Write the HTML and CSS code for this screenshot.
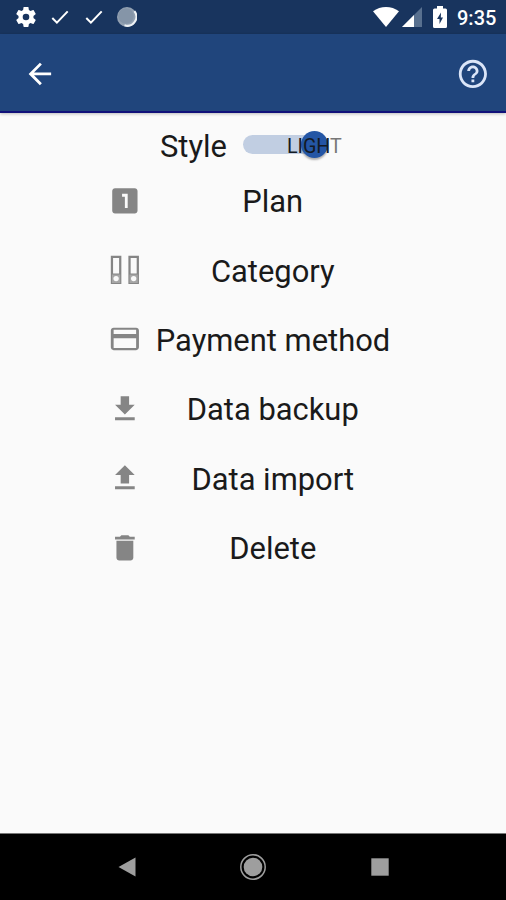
FILE: index.html
```html
<!DOCTYPE html>
<html lang="en">
<head>
<meta charset="utf-8">
<title>Settings</title>
<link rel="stylesheet" href="styles.css">
</head>
<body>
<div class="screen">
  <header class="status">
    <svg class="gear" viewBox="0 0 24 24"><path d="M19.43 12.98c.04-.32.07-.64.07-.98s-.03-.66-.07-.98l2.11-1.65c.19-.15.24-.42.12-.64l-2-3.46c-.12-.22-.39-.3-.61-.22l-2.49 1c-.52-.4-1.08-.73-1.69-.98l-.38-2.65C14.46 2.18 14.25 2 14 2h-4c-.25 0-.46.18-.49.42l-.38 2.65c-.61.25-1.17.59-1.69.98l-2.49-1c-.23-.09-.49 0-.61.22l-2 3.46c-.13.22-.07.49.12.64l2.11 1.65c-.04.32-.07.65-.07.98s.03.66.07.98l-2.11 1.65c-.19.15-.24.42-.12.64l2 3.46c.12.22.39.3.61.22l2.49-1c.52.4 1.08.73 1.69.98l.38 2.65c.03.24.24.42.49.42h4c.25 0 .46-.18.49-.42l.38-2.65c.61-.25 1.17-.59 1.69-.98l2.49 1c.23.09.49 0 .61-.22l2-3.46c.12-.22.07-.49-.12-.64zM12 15.3a3.3 3.3 0 1 1 0-6.600 3.300 3.300 0 0 1 0 6.600z"/></svg>
    <svg class="check" viewBox="0 0 18 14"><path d="M1.300 8l4.600 4.600L16.700 1.400"/></svg>
    <svg class="check" viewBox="0 0 18 14"><path d="M1.300 8l4.600 4.600L16.700 1.400"/></svg>
    <svg class="sync" viewBox="0 0 20 20"><circle cx="10" cy="10" r="10" fill="#93a1b2"/><path d="M17.400 4.200A9 9 0 0 1 7.500 18.300" fill="none" stroke="#eef2f5" stroke-width="2"/><circle cx="9" cy="9" r="7.800" fill="#8595a8"/></svg>
    <span class="spacer"></span>
    <svg class="wifi" viewBox="0 0 26 20"><path d="M0 4.300C7.500-1.400 18.500-1.400 26 4.300L13 20z"/></svg>
    <svg class="signal" viewBox="0 0 20 20"><path d="M20 0v20H0z" fill="#58708f"/><path d="M12 8v12H0z"/></svg>
    <svg class="battery" viewBox="0 0 14 22"><path d="M4 0h6v2.500h2.500A1.500 1.500 0 0 1 14 4v16.500a1.500 1.500 0 0 1-1.500 1.500h-11A1.500 1.500 0 0 1 0 20.500V4a1.500 1.500 0 0 1 1.500-1.500H4z"/><path d="M8 6.500L4 13h2.500v5L10 11.500H7.800z" fill="#18345e"/></svg>
    <span class="clock">9:35</span>
  </header>
  <nav class="appbar">
    <svg class="icon" viewBox="0 0 24 24"><path d="M20 11H7.830l5.590-5.590L12 4l-8 8 8 8 1.410-1.410L7.830 13H20z"/></svg>
    <svg class="icon help" viewBox="0 0 24 24"><path d="M11 18h2v-2h-2v2zm1-16C6.480 2 2 6.480 2 12s4.480 10 10 10 10-4.480 10-10S17.520 2 12 2zm0 18c-4.410 0-8-3.590-8-8s3.590-8 8-8 8 3.590 8 8-3.590 8-8 8zm0-14c-2.210 0-4 1.790-4 4h2c0-1.100.9-2 2-2s2 .9 2 2c0 2-3 1.750-3 5h2c0-2.250 3-2.500 3-5 0-2.210-1.790-4-4-4z"/></svg>
  </nav>
  <main class="content">
    <div class="style-row">
      <span class="label">Style</span>
      <div class="switch"><span class="thumb"></span><span class="mode">LIGH<span class="off">T</span></span></div>
    </div>
    <div class="row"><svg class="icon" viewBox="0 0 24 24"><path d="M19 3H5c-1.100 0-2 .9-2 2v14c0 1.100.9 2 2 2h14c1.100 0 2-.9 2-2V5c0-1.100-.9-2-2-2zm-5 14h-2V9h-2V7h4v10z"/></svg><span class="label">Plan</span></div>
    <div class="row"><svg class="icon binder" viewBox="0 0 24 24"><path d="M2.800 2.700h5.900v18.600H2.800zM15.300 2.700h5.900v18.600h-5.900zM2.800 15.300h5.900M15.300 15.300h5.900"/><path class="shade" d="M2.800 15.300h5.900v6H2.800zM15.300 15.300h5.900v6h-5.900z"/><circle class="hole" cx="5.750" cy="18.200" r="1.900"/><circle class="hole" cx="18.250" cy="18.200" r="1.900"/></svg><span class="label">Category</span></div>
    <div class="row"><svg class="icon" viewBox="0 0 24 24"><path d="M20 4H4c-1.110 0-1.990.89-1.990 2L2 18c0 1.110.89 2 2 2h16c1.110 0 2-.89 2-2V6c0-1.110-.89-2-2-2zm0 14.500H4V11.500h16zm0-10H4V5.500h16z"/></svg><span class="label">Payment method</span></div>
    <div class="row"><svg class="icon" viewBox="0 0 24 24"><path d="M19 9h-4V3H9v6H5l7 7zM5 18v2h14v-2z"/></svg><span class="label">Data backup</span></div>
    <div class="row"><svg class="icon" viewBox="0 0 24 24"><path d="M9 16h6v-6h4l-7-7-7 7h4zM5 18v2h14v-2z"/></svg><span class="label">Data import</span></div>
    <div class="row"><svg class="icon" viewBox="0 0 24 24"><path d="M6 19c0 1.100.9 2 2 2h8c1.100 0 2-.9 2-2V7H6zM19 4h-3.500l-1-1h-5l-1 1H5v2h14z"/></svg><span class="label">Delete</span></div>
  </main>
  <footer class="navbar">
    <svg viewBox="0 0 28 28"><path d="M5.500 14L22.500 4.500v19z"/></svg>
    <svg viewBox="0 0 28 28"><circle cx="14" cy="14" r="9.300"/><circle cx="14" cy="14" r="12.200" fill="none" stroke="#9e9e9e" stroke-width="1.500"/></svg>
    <svg viewBox="0 0 28 28"><path d="M5.300 5.300h17.400v17.400H5.300z"/></svg>
  </footer>
</div>
</body>
</html>
```
FILE: styles.css
```css
* { box-sizing: border-box; }
body { margin: 0; font-family: Roboto, sans-serif; }
svg { display: block; flex: none; }
.screen { width: 506px; height: 900px; display: flex; flex-direction: column; background: #fafafa; overflow: hidden; }
.status { height: 34px; flex: none; display: flex; align-items: center; padding: 0 10px 0 14px; background: #18345e; fill: #fff; }
.gear { width: 24px; height: 24px; }
.check { width: 18px; height: 14px; margin-left: 13px; fill: none; stroke: #fff; stroke-width: 2; }
.check + .check { margin-left: 16px; }
.sync { width: 20px; height: 20px; margin-left: 14px; }
.spacer { flex: 1; }
.wifi { width: 26px; height: 20px; }
.signal { width: 20px; height: 20px; margin-left: 3px; }
.battery { width: 14px; height: 22px; margin: 0 10px 0 11px; }
.clock { font-size: 20px; line-height: 34px; font-weight: 500; color: #fff; width: 39px; white-space: nowrap; padding-top: 2px; }
.appbar { height: 79px; flex: none; display: flex; align-items: center; justify-content: space-between; padding: 2px 16px 0 23px; background: #20457c; border-bottom: 2px solid #11117a; box-shadow: 0 1px 3px rgba(0, 0, 0, .25); }
.icon { width: 33.75px; height: 33.75px; fill: #858585; }
.appbar .icon { fill: #fff; }
.appbar .help { fill: #dbe5f8; }
.content { flex: 1; min-height: 0; }
.style-row { height: 53px; display: flex; align-items: center; padding: 12px 0 0 160px; }
.label { font-size: 30.9px; line-height: 36px; color: #1a1a1a; white-space: nowrap; padding-top: 3px; }
.style-row .label { padding-top: 2px; }
.switch { position: relative; width: 85px; height: 19px; margin: -3px 0 0 16px; border-radius: 10px; background: #c1cee2; }
.thumb { position: absolute; left: 58px; top: -4px; width: 27px; height: 27px; border-radius: 50%; background: #2456a5; box-shadow: 0 2px 2px rgba(0, 0, 0, .3); }
.mode { position: absolute; left: 44px; top: 0; font-size: 19.7px; line-height: 23px; color: #131a24; }
.off { color: #777; }
.row { height: 69.35px; display: grid; grid-template-columns: 33.75px 234px; column-gap: 14px; align-items: center; padding-left: 108px; }
.row .label { text-align: center; }
.binder { fill: none; stroke: #858585; stroke-width: 1.6; }
.shade { fill: #a6a6a6; stroke: none; }
.hole { fill: #fafafa; stroke: none; }
.navbar { height: 67px; flex: none; display: flex; align-items: center; justify-content: center; gap: 98.500px; background: #000; fill: #9e9e9e; border-top: 1px solid #777; }
.navbar svg { width: 28px; height: 28px; }
```
